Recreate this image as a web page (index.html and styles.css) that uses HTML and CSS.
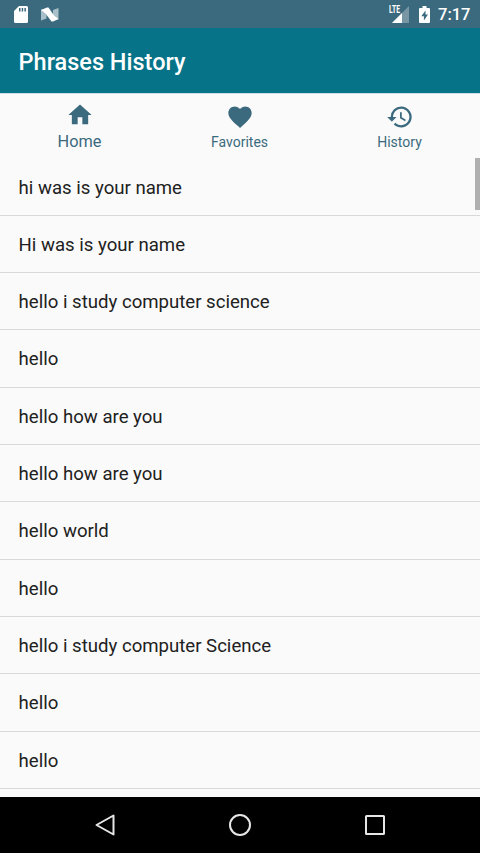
FILE: index.html
```html
<!DOCTYPE html>
<html lang="en">
<head>
<meta charset="utf-8">
<title>Phrases History</title>
<link rel="stylesheet" href="styles.css">
</head>
<body>
<div class="screen">
  <header class="status">
    <svg class="sd" viewBox="0 0 14 17"><path fill="#fff" fill-rule="evenodd" d="M5 0h7.500q1.500 0 1.500 1.500v14q0 1.500-1.500 1.500h-11Q0 17 0 15.500V5zM5 2v3.500h1.500V2zM7.700 2v3.500h1.500V2zM10.400 2v3.500h1.500V2z"/></svg>
    <svg class="nougat" viewBox="0 0 18 15"><path fill="#a9c0ca" d="M0 2.500h5.500v9L0 13.500zM12 3l5.500-2v11.500H12z"/><path fill="#fff" d="M0 3L6 .5h1.500L13 8.500l4.500 3.500-5.500 2.500h-1.500L4.500 6.500z"/></svg>
    <span class="spacer"></span>
    <span class="signal">
      <svg viewBox="0 0 21 18"><path fill="#7896a3" d="M20 1v17H3z"/><path fill="#fff" d="M13 8v10H3z"/></svg>
      <span class="lte">LTE</span>
    </span>
    <svg class="battery" viewBox="0 0 11 17"><path fill="#fff" d="M3.500 0h4v2H10q1 0 1 1v13q0 1-1 1H1q-1 0-1-1V3q0-1 1-1h2.500z"/><path fill="#3b6a7e" d="M6.500 4.500L2.300 10.300h2.600v4.200l4.100-6H6.500z"/></svg>
    <span class="clock">7:17</span>
  </header>
  <h1 class="title">Phrases History</h1>
  <main class="content">
    <nav class="tabs">
      <a class="tab active"><svg viewBox="0 0 24 24"><path d="M10 20v-6h4v6h5v-8h3L12 3 2 12h3v8z"/></svg><span>Home</span></a>
      <a class="tab"><svg viewBox="0 0 24 24"><path d="M12 21.350l-1.450-1.320C5.400 15.360 2 12.280 2 8.500 2 5.420 4.420 3 7.500 3c1.740 0 3.410.810 4.500 2.090C13.090 3.810 14.760 3 16.500 3 19.580 3 22 5.420 22 8.500c0 3.780-3.400 6.860-8.550 11.540z"/></svg><span>Favorites</span></a>
      <a class="tab"><svg viewBox="0 0 24 24"><path d="M13 3a9 9 0 0 0-9 9H1l3.890 3.890.070.140L9 12H6a7 7 0 1 1 2.060 4.940l-1.420 1.420A9 9 0 1 0 13 3zm-1 5v5l4.280 2.540.720-1.210-3.500-2.080V8z"/></svg><span>History</span></a>
    </nav>
    <ul class="phrases">
      <li>hi was is your name</li>
      <li>Hi was is your name</li>
      <li>hello i study computer science</li>
      <li>hello</li>
      <li>hello how are you</li>
      <li>hello how are you</li>
      <li>hello world</li>
      <li>hello</li>
      <li>hello i study computer Science</li>
      <li>hello</li>
      <li>hello</li>
    </ul>
    <div class="scrollbar"></div>
  </main>
  <footer class="navbar">
    <svg viewBox="0 0 24 24"><path d="M20.500 2.500v19L3.500 12z"/></svg>
    <svg viewBox="0 0 24 24"><circle cx="12" cy="12" r="10"/></svg>
    <svg viewBox="0 0 24 24"><rect x="3" y="3" width="18" height="18" rx=".5"/></svg>
  </footer>
</div>
</body>
</html>
```
FILE: styles.css
```css
* { box-sizing: border-box; }
body { margin: 0; font-family: Roboto, "Liberation Sans", sans-serif; background: #fafafa; }
svg { display: block; flex: none; }
.screen { width: 480px; height: 853px; display: flex; flex-direction: column; overflow: hidden; }
.status { height: 28px; flex: none; display: flex; align-items: center; padding: 0 10px 0 14px; background: #3b6a7e; color: #fff; }
.sd { width: 14px; height: 17px; }
.nougat { width: 18px; height: 15px; margin-left: 12.500px; }
.spacer { flex: 1; }
.signal { position: relative; }
.signal svg { width: 21px; height: 18px; }
.lte { position: absolute; left: 0; top: 0; font-size: 10px; line-height: 10px; font-weight: 700; transform: scaleX(.68); transform-origin: left; }
.battery { width: 11px; height: 17px; margin-left: 9px; }
.clock { font-size: 16.500px; line-height: 20px; font-weight: 500; margin: 2px 0 0 8px; width: 32px; white-space: nowrap; }
.title { height: 65px; flex: none; margin: 0; padding: 1px 18.600px 0; line-height: 67px; font-size: 23.500px; font-weight: 500; color: #fff; background: #077388; }
.content { position: relative; flex: 1; min-height: 0; overflow: hidden; background: #fafafa; border-top: 1px solid #c9dfe3; }
.tabs { height: 64.500px; display: flex; color: #3b6a7e; }
.tab { flex: 1; display: flex; flex-direction: column; align-items: center; padding: 8.500px 1px 0 0; font-size: 14px; line-height: 20px; }
.tab svg { width: 28px; height: 28px; fill: currentColor; }
.tab span { margin-top: 1px; }
.tab.active { font-size: 16.333px; padding-top: 6.500px; }
.tab.active span { margin-top: 3px; }
.phrases { margin: 0; padding: 0; list-style: none; }
.phrases li { height: 57.333px; padding: 0 18.600px; border-bottom: 1px solid #d9d9d9; font-size: 18.600px; line-height: 58px; color: #212121; }
.scrollbar { position: absolute; right: 0; top: 64px; width: 5px; height: 52px; background: #b0b0b0; }
.navbar { height: 56px; flex: none; display: flex; align-items: center; justify-content: center; gap: 111px; background: #000; }
.navbar svg { width: 24px; height: 24px; fill: none; stroke: #e6e6e6; stroke-width: 2; stroke-linejoin: round; }
```
